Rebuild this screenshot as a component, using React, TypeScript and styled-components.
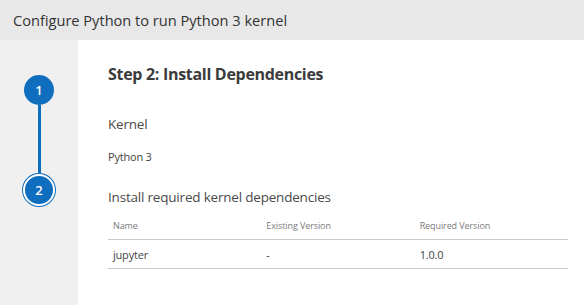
import React from "react";
import styled, { createGlobalStyle } from "styled-components";

const GlobalStyle = createGlobalStyle`
  html, body {
    margin: 0;
    padding: 0;
    background: #ffffff;
  }
  body {
    font-family: "Open Sans", "Noto Sans", sans-serif;
  }
`;

interface Dependency {
  name: string;
  existing: string;
  required: string;
}

const dependencies: Dependency[] = [
  { name: "jupyter", existing: "-", required: "1.0.0" },
];

const App: React.FC = () => {
  return (
    <>
      <GlobalStyle />
      <Dialog>
        <TitleBar>Configure Python to run Python 3 kernel</TitleBar>
        <Body>
          <Stepper>
            <StepCircle>1</StepCircle>
            <Connector />
            <StepCircle $current>2</StepCircle>
          </Stepper>
          <Content>
            <StepTitle>Step 2: Install Dependencies</StepTitle>
            <SectionLabel $gap={15}>Kernel</SectionLabel>
            <KernelName>Python 3</KernelName>
            <SectionLabel $gap={8}>Install required kernel dependencies</SectionLabel>
            <Table>
              <thead>
                <tr>
                  <HeadCell>Name</HeadCell>
                  <HeadCell>Existing Version</HeadCell>
                  <HeadCell>Required Version</HeadCell>
                </tr>
              </thead>
              <tbody>
                {dependencies.map((dep) => (
                  <tr key={dep.name}>
                    <Cell>{dep.name}</Cell>
                    <Cell>{dep.existing}</Cell>
                    <Cell>{dep.required}</Cell>
                  </tr>
                ))}
              </tbody>
            </Table>
          </Content>
        </Body>
      </Dialog>
    </>
  );
};

const Dialog = styled.div`
  width: 584px;
  height: 305px;
  display: flex;
  flex-direction: column;
  overflow: hidden;
`;

const TitleBar = styled.div`
  height: 40px;
  flex-shrink: 0;
  display: flex;
  align-items: center;
  padding-left: 13px;
  background: #e8e8e8;
  color: #333333;
  font-size: 14.6px;
`;

const Body = styled.div`
  flex: 1;
  display: flex;
`;

const Stepper = styled.div`
  width: 78px;
  flex-shrink: 0;
  background: #f0f0f0;
  display: flex;
  flex-direction: column;
  align-items: center;
  padding-top: 35px;
  box-sizing: border-box;
`;

const StepCircle = styled.div<{ $current?: boolean }>`
  width: ${(p) => (p.$current ? "28px" : "30px")};
  height: ${(p) => (p.$current ? "28px" : "30px")};
  border-radius: 50%;
  background: #106ebe;
  border: ${(p) => (p.$current ? "2px solid #ffffff" : "none")};
  box-shadow: ${(p) => (p.$current ? "0 0 0 1px #106ebe" : "none")};
  margin-top: ${(p) => (p.$current ? "1px" : "0")};
  color: #ffffff;
  font-size: 13px;
  font-weight: 600;
  display: flex;
  align-items: center;
  justify-content: center;
  flex-shrink: 0;
`;

const Connector = styled.div`
  width: 3px;
  height: 68px;
  background: #106ebe;
`;

const Content = styled.div`
  flex: 1;
  padding: 22px 16px 0 30px;
  color: #444444;
`;

const StepTitle = styled.h1`
  margin: 0 0 28px;
  font-size: 16px;
  font-weight: 700;
  line-height: 24px;
  color: #3b3b3b;
  letter-spacing: -0.3px;
`;

const SectionLabel = styled.div<{ $gap: number }>`
  font-size: 13.5px;
  line-height: 20px;
  color: #4a4a4a;
  letter-spacing: -0.2px;
  margin-bottom: ${(p) => p.$gap}px;
`;

const KernelName = styled.div`
  font-size: 11px;
  line-height: 16px;
  color: #444444;
  margin-bottom: 22px;
  letter-spacing: -0.2px;
`;

const Table = styled.table`
  width: 460px;
  border-collapse: collapse;
  table-layout: fixed;
`;

const HeadCell = styled.th`
  text-align: left;
  font-weight: 400;
  font-size: 9px;
  line-height: 14px;
  color: #7a7a7a;
  padding: 4px 5px 6px;
  border-bottom: 1px solid #c8c8c8;
  letter-spacing: -0.1px;
`;

const Cell = styled.td`
  font-size: 11px;
  line-height: 16px;
  color: #444444;
  padding: 7px 5px 5px;
  border-bottom: 1px solid #c8c8c8;
  letter-spacing: -0.2px;
`;

export default App;
